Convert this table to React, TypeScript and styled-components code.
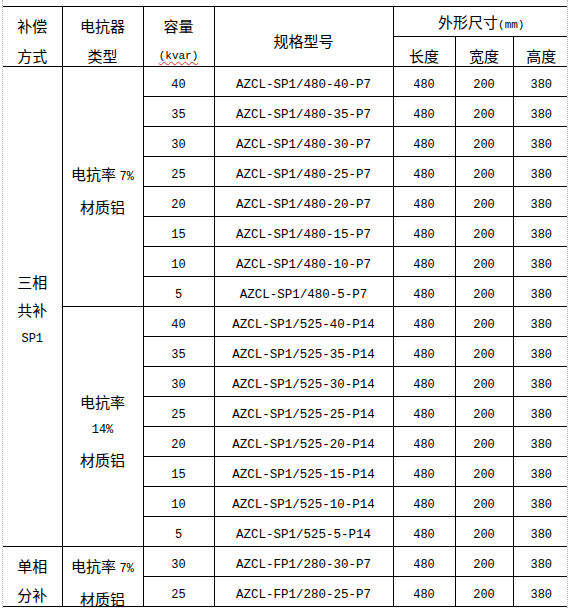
import React from "react";
import styled, { createGlobalStyle } from "styled-components";

const Global = createGlobalStyle`
  html, body { margin: 0; padding: 0; background: #fff; }
  body { font-family: "Noto Sans CJK SC", "Noto Sans", sans-serif; color: #000; }
`;

const Page = styled.div`
  margin-left: 2px;
  width: 566px;
  height: 608px;
  padding-top: 6px;
  box-sizing: border-box;
  border-left: 1px dotted #bdbdbd;
  border-right: 1px dotted #bdbdbd;
  overflow: hidden;
`;

const Table = styled.table`
  border-collapse: collapse;
  table-layout: fixed;
  width: 566px;
  border-top: 1px solid #000;
  border-bottom: 1px solid #000;
`;

const Th = styled.th<{ $pad?: number; $multi?: boolean }>`
  font-weight: normal;
  font-size: 15px;
  height: ${(p) => (p.$multi ? "auto" : `${29 - (p.$pad ?? 8)}px`)};
  padding: ${(p) => (p.$multi ? 0 : p.$pad ?? 8)}px 0 0;
  line-height: 21px;
  text-align: center;
  vertical-align: ${(p) => (p.$multi ? "top" : "middle")};
  border: 1px solid #000;
  &:first-child { border-left: none; }
  &:last-child { border-right: none; }
`;

const Td = styled.td<{ $kind?: "num" | "code" | "cn"; $multi?: boolean }>`
  height: ${(p) => (p.$multi ? "auto" : "21px")};
  padding: ${(p) => (p.$multi ? 0 : 8)}px 0 0;
  text-align: center;
  vertical-align: ${(p) => (p.$multi ? "top" : "middle")};
  border: 1px solid #000;
  line-height: 21px;
  white-space: nowrap;
  font-family: ${(p) =>
    p.$kind === "cn"
      ? '"Noto Sans CJK SC", "Noto Sans", sans-serif'
      : '"Liberation Mono", monospace'};
  font-size: ${(p) => (p.$kind === "cn" ? "15px" : p.$kind === "code" ? "12.5px" : "12px")};
  &.first { border-left: none; }
  &.last { border-right: none; }
`;

/* stacked lines; $fit keeps a two-line block inside a two-row cell */
const Lines = styled.div<{ $gap?: number; $fit?: boolean }>`
  display: flex;
  flex-direction: column;
  align-items: center;
  line-height: ${(p) => p.$gap ?? 29}px;
  ${(p) =>
    p.$fit &&
    `
    box-sizing: border-box;
    height: 58px;
    padding-top: 4px;
    overflow: visible;
  `}
`;

const Latin = styled.span<{ $size?: number }>`
  font-family: "Liberation Mono", monospace;
  font-size: ${(p) => p.$size ?? 12}px;
`;

const Squiggle = styled(Latin)`
  text-decoration: underline wavy #e03030;
  text-decoration-thickness: 1px;
  text-underline-offset: 2px;
`;

type Row = { cap: number; code: string };

const make = (prefix: string, caps: number[], suffix: string): Row[] =>
  caps.map((c) => ({ cap: c, code: `${prefix}-${c}-${suffix}` }));

const caps = [40, 35, 30, 25, 20, 15, 10, 5];
const rows: Row[] = [
  ...make("AZCL-SP1/480", caps, "P7"),
  ...make("AZCL-SP1/525", caps, "P14"),
  ...make("AZCL-FP1/280", [30, 25], "P7"),
];

const Rate7 = ({ fit }: { fit?: boolean }) => (
  <Lines $gap={fit ? 29 : 30} $fit={fit}>
    <span>
      电抗率 <Latin $size={12}>7%</Latin>
    </span>
    <span>材质铝</span>
  </Lines>
);

export default function App() {
  return (
    <>
      <Global />
      <Page>
        <Table>
          <colgroup>
            <col style={{ width: 59 }} />
            <col style={{ width: 81 }} />
            <col style={{ width: 71 }} />
            <col style={{ width: 179 }} />
            <col style={{ width: 62 }} />
            <col style={{ width: 58 }} />
            <col style={{ width: 56 }} />
          </colgroup>
          <thead>
            <tr>
              <Th rowSpan={2} $multi>
                <Lines $gap={30} $fit>
                  <span>补偿</span>
                  <span>方式</span>
                </Lines>
              </Th>
              <Th rowSpan={2} $multi>
                <Lines $gap={30} $fit>
                  <span>电抗器</span>
                  <span>类型</span>
                </Lines>
              </Th>
              <Th rowSpan={2} $multi>
                <Lines $gap={30} $fit>
                  <span>容量</span>
                  <Squiggle $size={11}>(kvar)</Squiggle>
                </Lines>
              </Th>
              <Th rowSpan={2} $pad={8}>
                规格型号
              </Th>
              <Th colSpan={3} $pad={4}>
                外形尺寸<Latin $size={11}>(mm)</Latin>
              </Th>
            </tr>
            <tr>
              <Th>长度</Th>
              <Th>宽度</Th>
              <Th>高度</Th>
            </tr>
          </thead>
          <tbody>
            {rows.map((r, i) => (
              <tr key={i}>
                {i === 0 && (
                  <Td $kind="cn" rowSpan={16} className="first">
                    <Lines $gap={28.5}>
                      <span>三相</span>
                      <span>共补</span>
                      <Latin>SP1</Latin>
                    </Lines>
                  </Td>
                )}
                {i === 16 && (
                  <Td $kind="cn" rowSpan={2} $multi className="first">
                    <Lines $gap={29} $fit>
                      <span>单相</span>
                      <span>分补</span>
                    </Lines>
                  </Td>
                )}
                {i === 0 && (
                  <Td $kind="cn" rowSpan={8}>
                    <Rate7 />
                  </Td>
                )}
                {i === 16 && (
                  <Td $kind="cn" rowSpan={2} $multi>
                    <Rate7 fit />
                  </Td>
                )}
                {i === 8 && (
                  <Td $kind="cn" rowSpan={8}>
                    <Lines>
                      <span>电抗率</span>
                      <Latin>14%</Latin>
                      <span>材质铝</span>
                    </Lines>
                  </Td>
                )}
                <Td $kind="num">{r.cap}</Td>
                <Td $kind="code">{r.code}</Td>
                <Td $kind="num">480</Td>
                <Td $kind="num">200</Td>
                <Td $kind="num" className="last">
                  380
                </Td>
              </tr>
            ))}
          </tbody>
        </Table>
      </Page>
    </>
  );
}
